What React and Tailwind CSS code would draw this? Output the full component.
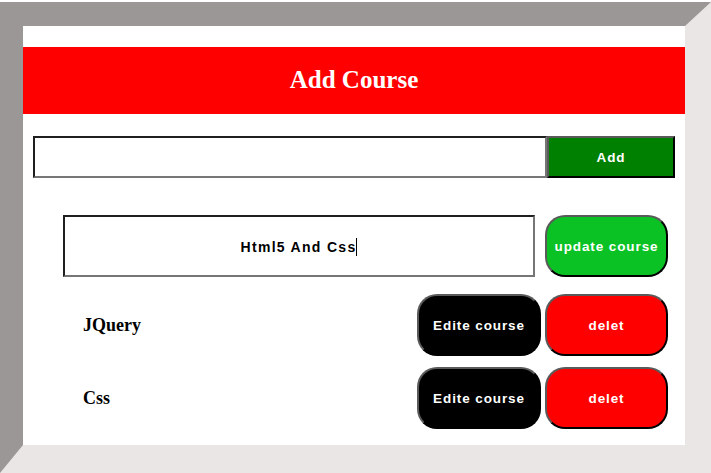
import { useState } from 'react';

const courses = ['JQuery', 'Css'];

const btnText = 'font-["Liberation_Sans",Arial,sans-serif] font-bold text-[13.5px] tracking-[0.9px] text-white';
const outset = 'border-2 border-t-[#5a5a5a] border-l-[#5a5a5a] border-r-black border-b-black';

function CourseRow({ name }) {
  return (
    <div className="flex items-center h-[62px]">
      <span className='flex-1 pl-[20px] font-["Liberation_Serif","Times_New_Roman",serif] font-bold text-[18px] text-black'>
        {name}
      </span>
      <button className={`w-[124px] h-full pt-[2px] rounded-[20px] bg-black ${outset} ${btnText}`}>Edite course</button>
      <button className={`ml-[4px] w-[123px] h-full pt-[2px] rounded-[20px] bg-[#ff0000] ${outset} ${btnText}`}>delet</button>
    </div>
  );
}

export default function App() {
  const [edit] = useState('Html5 And Css');

  return (
    <div className="pt-[2px] w-[711px] h-[473px] bg-white">
      <div className="w-[711px] h-[471px] border-solid border-t-[24px] border-l-[23px] border-r-[26px] border-b-[28px] border-t-[#9a9796] border-l-[#9a9796] border-r-[#ebe6e6] border-b-[#ebe6e6] bg-white">
        <div className="pt-[21px]">
          <div className="h-[67px] bg-[#ff0000] flex items-center justify-center">
            <h2 className='-mt-[2px] font-["Liberation_Serif","Times_New_Roman",serif] font-bold text-[25px] text-white'>Add Course</h2>
          </div>

          <div className="mt-[22px] mx-[10px] flex h-[42px]">
            <div className="flex-1 border-2 border-t-[#1f1f1f] border-l-[#1f1f1f] border-r-[#767676] border-b-[#767676] bg-white" />
            <button className={`w-[128px] h-full pt-[3px] bg-[#008000] ${outset} ${btnText}`}>Add</button>
          </div>

          <div className="mt-[37px] ml-[40px] mr-[17px]">
            <div className="flex h-[62px]">
              <div className="w-[472px] pt-[2px] border-2 border-t-[#1f1f1f] border-l-[#1f1f1f] border-r-[#767676] border-b-[#767676] bg-white flex items-center justify-center">
                <span className='font-["Liberation_Sans",Arial,sans-serif] font-bold text-[14px] tracking-[1.3px] text-black'>{edit}</span>
                <span className="w-px h-[18px] bg-black" />
              </div>
              <button className={`ml-[10px] w-[123px] h-full pt-[3px] rounded-[20px] bg-[#0ac224] ${outset} ${btnText}`}>update course</button>
            </div>

            <div className="mt-[17px] flex flex-col gap-[11px]">
              {courses.map((c) => <CourseRow key={c} name={c} />)}
            </div>
          </div>
        </div>
      </div>
    </div>
  );
}
